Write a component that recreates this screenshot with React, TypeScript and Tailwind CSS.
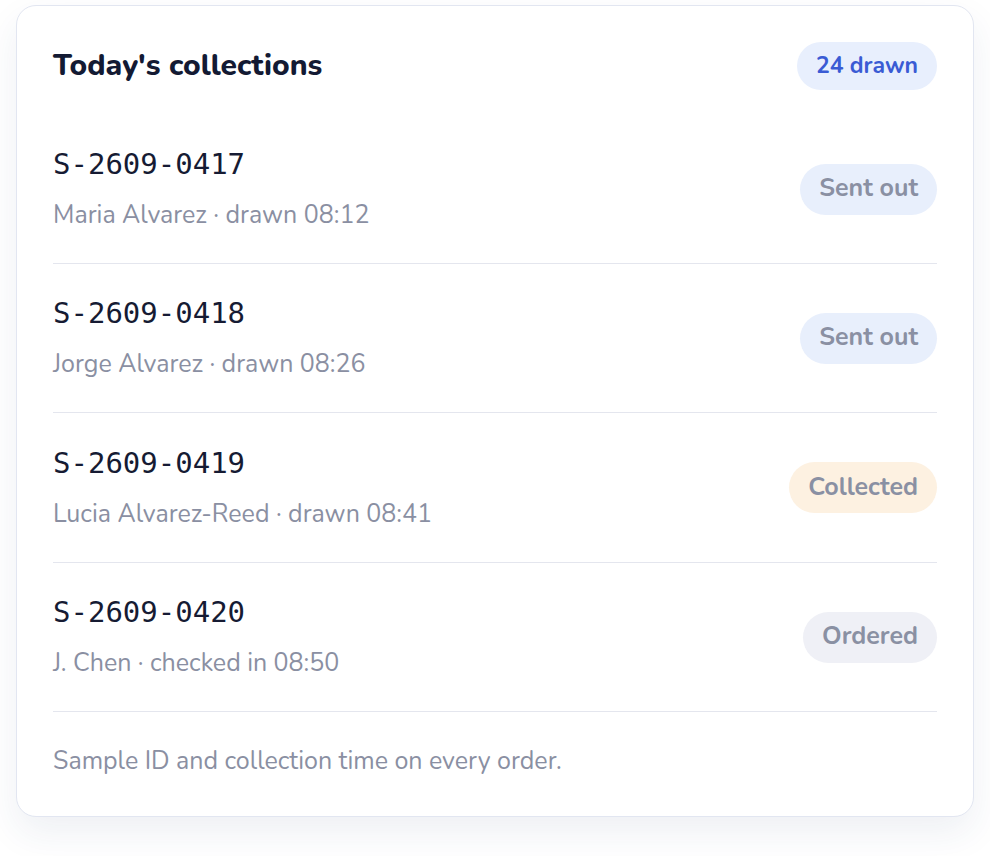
import React from "react";

const rows = [
  { id: "S-2609-0417", sub: "Maria Alvarez · drawn 08:12", status: "Sent out", badge: "bg-[#e8effc]" },
  { id: "S-2609-0418", sub: "Jorge Alvarez · drawn 08:26", status: "Sent out", badge: "bg-[#e8effc]" },
  { id: "S-2609-0419", sub: "Lucia Alvarez-Reed · drawn 08:41", status: "Collected", badge: "bg-[#fdf1e1]" },
  { id: "S-2609-0420", sub: "J. Chen · checked in 08:50", status: "Ordered", badge: "bg-[#eff0f6]" },
];

export default function App() {
  return (
    <div className="min-h-[856px] w-[990px] bg-white pt-[5px] px-[16px]" style={{ fontFamily: "Nunito, 'Noto Sans', sans-serif" }}>
      <div className="rounded-[20px] border border-[#e2e6f1] bg-white px-[36px] pt-[36px] pb-[39px] shadow-[0_16px_36px_rgba(40,60,120,0.08)]">
        <div className="flex items-center justify-between h-[48px] mb-[25px]">
          <h2 className="text-[30px] leading-[36px] font-extrabold text-[#131a33]">Today's collections</h2>
          <span className="h-[48px] px-[19px] rounded-full bg-[#e8effd] text-[#3a5bd4] text-[23px] font-bold flex items-center">24 drawn</span>
        </div>
        {rows.map((r, i) => (
          <div key={r.id} className={`flex items-center justify-between border-b border-[#e4e6ee] ${i === 2 ? "h-[150px]" : "h-[149px]"}`}>
            <div className="flex flex-col gap-[18px]">
              <div className="text-[29px] leading-[34px] text-[#161b33]" style={{ fontFamily: "'DejaVu Sans Mono', monospace" }}>{r.id}</div>
              <div className="text-[25px] leading-[32px] text-[#8a8fa2]">{r.sub}</div>
            </div>
            <span className={`h-[51px] px-[19px] rounded-full ${r.badge} text-[#8a90a3] text-[25px] font-bold flex items-center`}>{r.status}</span>
          </div>
        ))}
        <p className="mt-[33px] text-[25px] leading-[32px] text-[#8a8fa2]">Sample ID and collection time on every order.</p>
      </div>
    </div>
  );
}
